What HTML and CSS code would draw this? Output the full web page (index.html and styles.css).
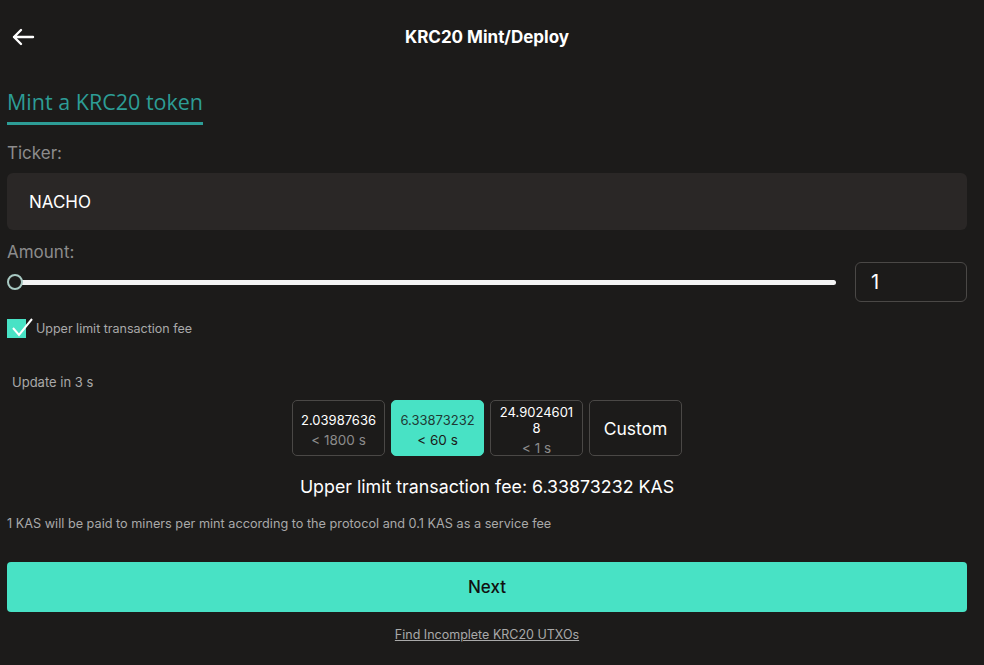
FILE: index.html
```html
<!DOCTYPE html>
<html lang="en">
<head>
    <meta charset="UTF-8">
    <meta name="viewport" content="width=device-width, initial-scale=1.0">
    <title>KRC20 Mint/Deploy</title>
    <link rel="stylesheet" href="styles.css">
</head>
<body>
    <div class="page">
        <header class="topbar">
            <button class="back" aria-label="Back">
                <svg width="24" height="18" viewBox="0 0 24 18"><path d="M22 9H3M10 2L3 9l7 7" fill="none" stroke="#fff" stroke-width="2.4" stroke-linecap="round" stroke-linejoin="round"/></svg>
            </button>
            <h1>KRC20 Mint/Deploy</h1>
        </header>

        <div class="tabs">
            <span class="tab active">Mint a KRC20 token</span>
        </div>

        <label class="field-label">Ticker:</label>
        <div class="ticker">NACHO</div>

        <label class="field-label amount-label">Amount:</label>
        <div class="amount-row">
            <div class="slider">
                <span class="thumb"></span>
                <span class="track"></span>
            </div>
            <div class="amount-box">1</div>
        </div>

        <div class="check-row">
            <span class="checkbox">
                <svg width="24" height="20" viewBox="0 0 24 20"><path d="M4 10l6 7L23 1" fill="none" stroke="#fff" stroke-width="2"/></svg>
            </span>
            <span>Upper limit transaction fee</span>
        </div>

        <p class="update">Update in 3 s</p>

        <div class="fees">
            <div class="fee">
                <span class="amt">2.03987636</span>
                <span class="time">&lt; 1800 s</span>
            </div>
            <div class="fee selected">
                <span class="amt">6.33873232</span>
                <span class="time">&lt; 60 s</span>
            </div>
            <div class="fee">
                <span class="amt">24.90246018</span>
                <span class="time">&lt; 1 s</span>
            </div>
            <div class="fee custom">Custom</div>
        </div>

        <p class="fee-total">Upper limit transaction fee: 6.33873232 KAS</p>

        <p class="note">1 KAS will be paid to miners per mint according to the protocol and 0.1 KAS as a service fee</p>

        <button class="next">Next</button>

        <a class="utxo-link" href="#">Find Incomplete KRC20 UTXOs</a>
    </div>
</body>
</html>
```

FILE: styles.css
```css
html, body { margin: 0; background-color: #1c1b1a; }
body { font-family: Inter, "Liberation Sans", sans-serif; color: #fff; }
.page { padding: 0 17px 0 7px; height: 665px; box-sizing: border-box; }

.topbar { position: relative; height: 74px; display: flex; align-items: center; justify-content: center; }
.topbar h1 { margin: 0; font-size: 17px; font-weight: 700; }
.back { position: absolute; left: 4px; top: 28px; background: none; border: none; padding: 0; cursor: pointer; }

.tabs { padding-top: 13px; }
.tab { display: inline-block; font-family: "Open Sans", "Noto Sans", sans-serif; font-size: 21.5px; color: #2d9d96; padding-bottom: 6px; }
.tab.active { border-bottom: 3px solid #2d9d96; }

.field-label { display: block; color: #8c8c8c; font-size: 17px; margin-top: 17px; line-height: 22px; }
.ticker { margin-top: 9px; height: 57px; background-color: #2a2726; border-radius: 6px; display: flex; align-items: center; padding-left: 22px; font-size: 17px; }
.amount-label { margin-top: 11px; }

.amount-row { display: flex; align-items: center; gap: 19px; margin-top: -1px; }
.slider { flex: 1; position: relative; height: 20px; display: flex; align-items: center; }
.track { flex: 1; height: 5px; background-color: #f4f4f4; border-radius: 3px; margin-left: 6px; }
.thumb { position: absolute; left: 0; top: 2px; width: 12px; height: 12px; border: 2px solid #a8c9c2; border-radius: 50%; background-color: #1c1b1a; z-index: 1; }
.amount-box { border: 1px solid #4a4846; border-radius: 6px; display: flex; align-items: center; padding-left: 15px; box-sizing: border-box; width: 112px; height: 40px; font-size: 20px; }

.check-row { display: flex; align-items: center; gap: 10px; margin-top: 17px; font-size: 12.5px; color: #a9a9a9; }
.checkbox { width: 19px; height: 19px; background-color: #48e2c5; position: relative; }
.checkbox svg { position: absolute; left: 2px; top: -1px; }

.update { margin: 36px 0 0 5px; font-size: 13px; color: #a9a9a9; }

.fees { display: flex; justify-content: center; gap: 6px; margin-top: 10px; }
.fee { width: 93px; height: 56px; box-sizing: border-box; border: 1px solid #4a4846; border-radius: 5px; display: flex; flex-direction: column; align-items: center; justify-content: center; text-align: center; padding: 3px 6px 0; }
.fee .amt { font-size: 13px; line-height: 16px; word-break: break-all; }
.fee .time { font-size: 13.5px; line-height: 16px; color: #8c8c8c; margin-top: 4px; }
.fee.selected { background-color: #48e2c5; border-color: #48e2c5; }
.fee.selected .amt { color: #1f3a35; }
.fee.selected .time { color: #1c1b1a; }
.fee.custom { font-size: 17.5px; padding-top: 0; }

.fee-total { text-align: center; font-size: 17.8px; margin: 20px 0 0; }
.note { font-size: 12.7px; color: #a9a9a9; margin: 19px 0 0; }

.next { display: block; width: 100%; height: 50px; margin-top: 31px; border: none; border-radius: 4px; background-color: #48e2c5; color: #111; font-family: Inter, "Liberation Sans", sans-serif; font-size: 17px; font-weight: 500; cursor: pointer; }

.utxo-link { display: block; width: max-content; margin: 15px auto 0; font-size: 12.5px; color: #a9a9a9; text-decoration: underline; }
```
